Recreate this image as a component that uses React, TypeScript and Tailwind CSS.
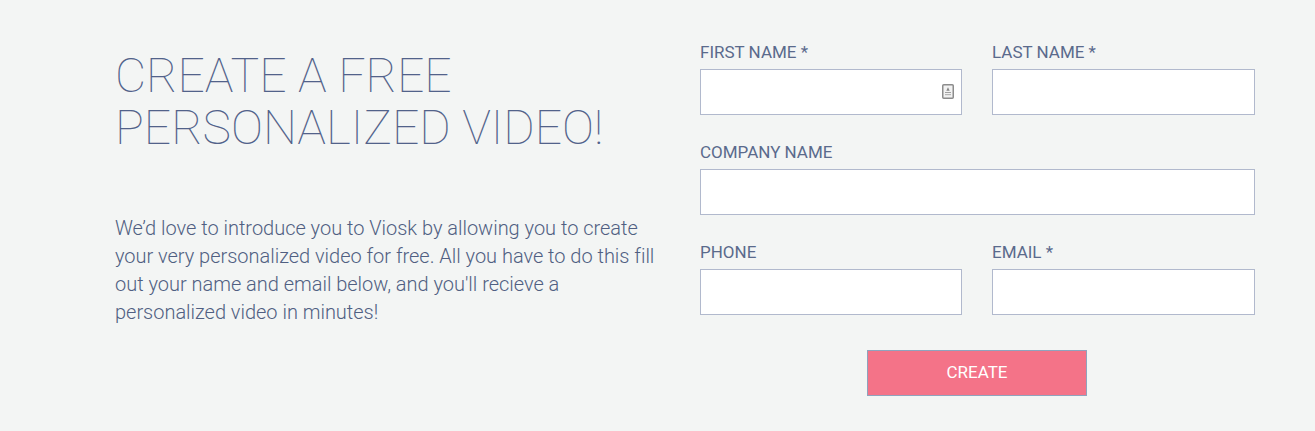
export default function App() {
  const label = "block h-[24px] text-[17px] leading-[24px] font-normal text-[#5a6a8c]";
  const input = "block w-full h-[46px] mt-[5px] border border-[#b1b9cd] bg-white outline-none";
  return (
    <div className="flex h-[431px] w-[1315px] overflow-hidden bg-[#f3f5f4] pl-[115px] pr-[60px] font-['Roboto',sans-serif]">
      <div className="w-[585px] shrink-0 pt-[50px] pr-[30px]">
        <h1 className="text-[48px] leading-[52px] font-thin text-[#52628a] uppercase">
          Create a free<br />personalized video!
        </h1>
        <p className="mt-[60px] text-[20px] leading-[28px] font-light tracking-[-0.02px] text-[#505f82]">
          We’d love to introduce you to Viosk by allowing you to create your very personalized video for free. All you have to do this fill out your name and email below, and you'll recieve a personalized video in minutes!
        </p>
      </div>
      <form className="flex flex-1 flex-col pt-[40px]">
        <div className="grid grid-cols-[262px_263px] gap-x-[30px] gap-y-[25px]">
          <div>
            <label className={label}>FIRST NAME *</label>
            <div className="relative">
              <input className={input} />
              <svg className="absolute right-[8px] top-[15px]" width="12" height="15" viewBox="0 0 12 15">
                <rect x="0.75" y="0.75" width="10.5" height="13.5" rx="1" fill="#f2f2f2" stroke="#8c8c8c" strokeWidth="1.5" />
                <path d="M6 3.2l1.7 3.6H4.3z" fill="#858585" />
                <rect x="3" y="8" width="6" height="1" fill="#a0a0a0" />
                <rect x="3" y="10" width="6" height="1.2" fill="#b5b5b5" />
              </svg>
            </div>
          </div>
          <div>
            <label className={label}>LAST NAME *</label>
            <input className={input} />
          </div>
          <div className="col-span-2">
            <label className={label}>COMPANY NAME</label>
            <input className={input} />
          </div>
          <div>
            <label className={label}>PHONE</label>
            <input className={input} />
          </div>
          <div>
            <label className={label}>EMAIL *</label>
            <input className={input} />
          </div>
        </div>
        <button type="button" className="ml-[167px] mt-[35px] h-[46px] w-[220px] border border-[#8fa3bd] bg-[#f47388] text-[17px] font-normal text-white">
          CREATE
        </button>
      </form>
    </div>
  );
}
